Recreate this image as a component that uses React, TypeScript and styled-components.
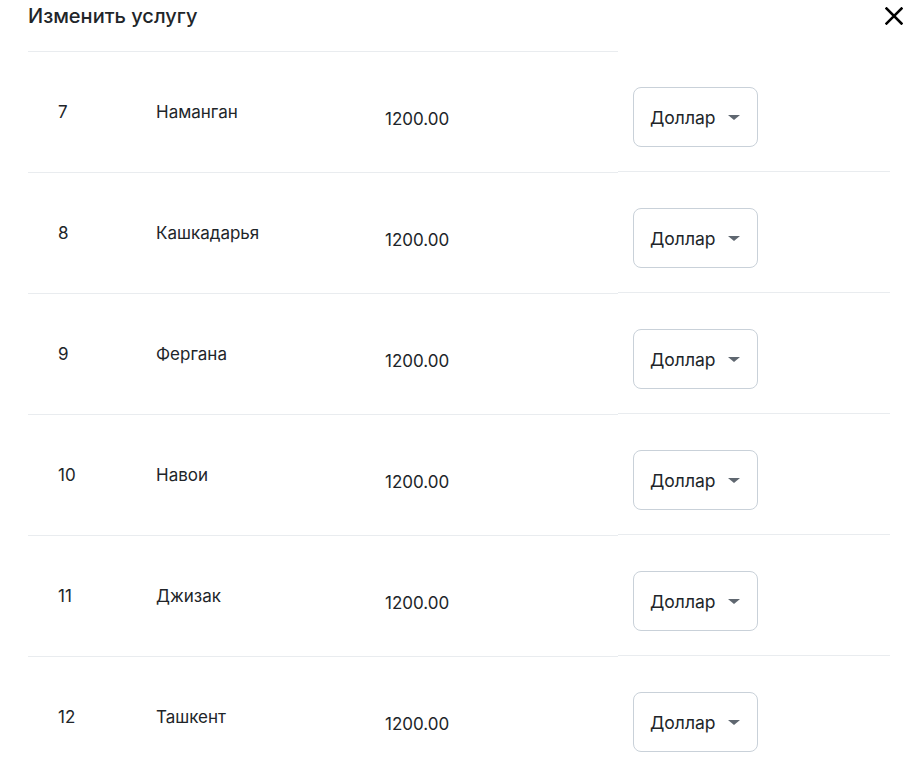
import React from "react";
import styled, { createGlobalStyle } from "styled-components";

const Global = createGlobalStyle`
  html, body { margin: 0; padding: 0; background: #fff; }
  body { font-family: Inter, "Noto Sans", sans-serif; color: #212529; overflow: hidden; }
`;

const Modal = styled.div`
  width: 920px;
  height: 767px;
  overflow: hidden;
  box-sizing: border-box;
`;

const Header = styled.div`
  display: flex;
  align-items: flex-start;
  justify-content: space-between;
  height: 51px;
  padding: 4px 17px 0 28px;
  box-sizing: border-box;
`;

const Title = styled.h5`
  margin: 0;
  font-size: 20px;
  line-height: 24px;
  font-weight: 500;
  color: #212529;
`;

const Close = styled.button`
  width: 18px;
  height: 18px;
  margin-top: 3px;
  padding: 0;
  border: 0;
  background: transparent;
  display: flex;
  align-items: center;
  justify-content: center;
  cursor: pointer;
`;

const Table = styled.div`
  margin: 0 30px 0 28px;
  display: flex;
  flex-direction: column;
`;

const Row = styled.div`
  display: grid;
  grid-template-columns: 98px 229px 263px 272px;
  height: 121px;
`;

const Cell = styled.div<{ $top: number }>`
  border-top: 1px solid #e9ecef;
  padding: ${(p) => p.$top}px 0 0 30px;
  font-size: 17px;
  line-height: 24px;
  color: #212529;
  box-sizing: border-box;
`;

const SelectCell = styled.div`
  border-bottom: 1px solid #e9ecef;
  padding: 36px 0 0 15px;
  box-sizing: border-box;
`;

const Select = styled.div`
  width: 125px;
  height: 60px;
  box-sizing: border-box;
  border: 1px solid #c9d1d9;
  border-radius: 8px;
  display: flex;
  align-items: center;
  padding: 0 17px 0 16px;
  justify-content: space-between;
  font-size: 17.5px;
  color: #212529;
`;

const Caret = styled.span`
  width: 0;
  height: 0;
  border-left: 6px solid transparent;
  border-right: 6px solid transparent;
  border-top: 5px solid #5f6770;
  margin-top: 1px;
`;

const rows = [
  { n: 7, name: "Наманган" },
  { n: 8, name: "Кашкадарья" },
  { n: 9, name: "Фергана" },
  { n: 10, name: "Навои" },
  { n: 11, name: "Джизак" },
  { n: 12, name: "Ташкент" },
];

export default function App() {
  return (
    <Modal>
      <Global />
      <Header>
        <Title>Изменить услугу</Title>
        <Close aria-label="close">
          <svg width="18" height="18" viewBox="0 0 18 18">
            <path d="M1.5 1.5 L16.5 16.5 M16.5 1.5 L1.5 16.5" stroke="#000" strokeWidth="2.5" strokeLinecap="square" fill="none" />
          </svg>
        </Close>
      </Header>
      <Table>
        {rows.map((r) => (
          <Row key={r.n}>
            <Cell $top={48}>{r.n}</Cell>
            <Cell $top={48}>{r.name}</Cell>
            <Cell $top={55}>1200.00</Cell>
            <SelectCell>
              <Select>
                <span>Доллар</span>
                <Caret />
              </Select>
            </SelectCell>
          </Row>
        ))}
      </Table>
    </Modal>
  );
}
